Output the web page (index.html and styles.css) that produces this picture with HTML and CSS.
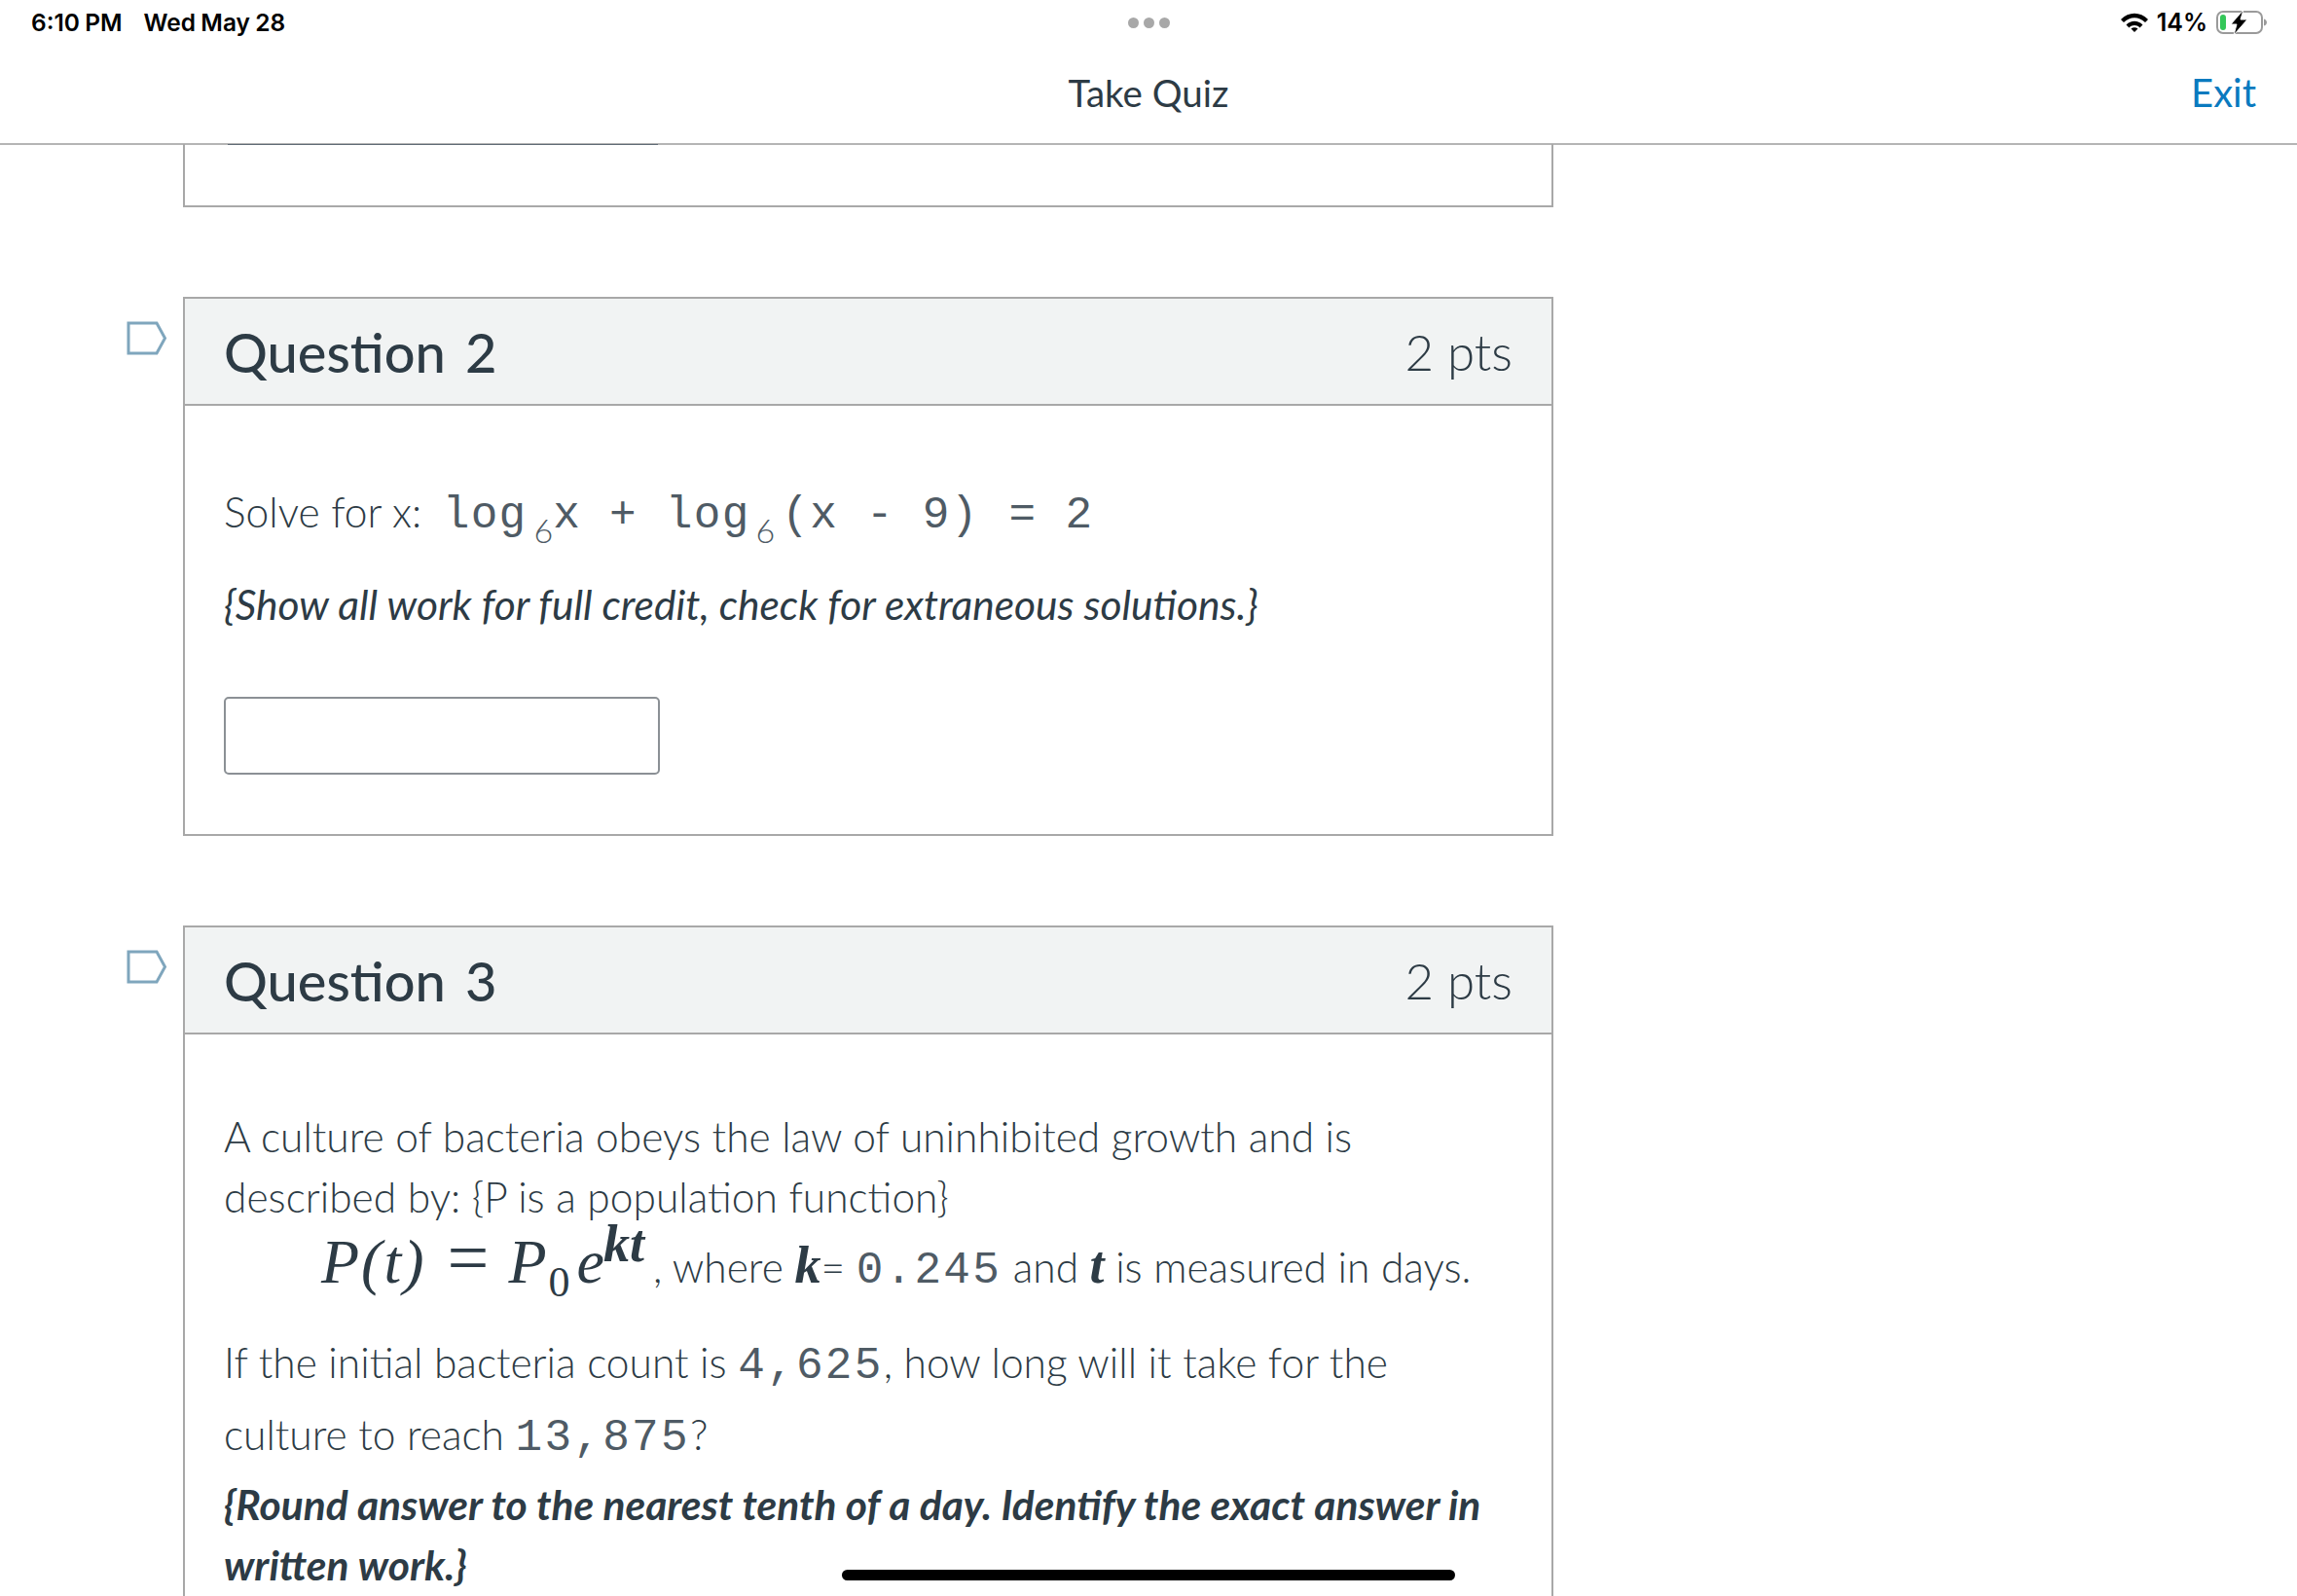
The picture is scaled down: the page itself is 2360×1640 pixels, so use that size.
FILE: index.html
```html
<!DOCTYPE html>
<html lang="en">
<head>
    <meta charset="UTF-8">
    <title>Take Quiz</title>
    <link rel="stylesheet" href="styles.css">
</head>
<body>

    <!-- Status Bar -->
    <div class="status-bar">
        <div class="status-left">
            <span>6:10 PM</span>
            <span>Wed May 28</span>
        </div>
        <div class="status-dots"><i></i><i></i><i></i></div>
        <div class="status-right">
            <svg class="wifi" width="28" height="20" viewBox="0 0 28 20">
                <path d="M0 7C8-1.500 20-1.500 28 7L25 10C18.500 3.500 9.500 3.500 3 10Z"/>
                <path d="M5.500 12.500C10.500 7.500 17.500 7.500 22.500 12.500L19.500 15.500C16.200 12.300 11.800 12.300 8.500 15.500Z"/>
                <path d="M10.500 16.500C12.500 14.800 15.500 14.800 17.500 16.500L14 20Z"/>
            </svg>
            <span class="battery-text">14%</span>
            <svg class="battery" width="52" height="26" viewBox="0 0 52 26">
                <rect x="1" y="2" width="46" height="22" rx="6" fill="none" stroke="#9a9a9a" stroke-width="2"/>
                <rect x="4" y="5" width="6" height="16" rx="3" fill="#34c759"/>
                <path d="M49 9.500C51 10 52 11.500 52 13C52 14.500 51 16 49 16.500Z" fill="#9a9a9a"/>
                <path d="M28 0L15 15H21L18 26L32 10H25Z" fill="#000" stroke="#fff" stroke-width="1"/>
            </svg>
        </div>
    </div>

    <!-- Header Section -->
    <div class="header">
        <div class="header-title">Take Quiz</div>
        <a class="exit-link">Exit</a>
    </div>

    <!-- Quiz Section -->
    <div class="quiz">

        <!-- End of Question 1 -->
        <div class="question-tail">
            <div class="tail-input"></div>
        </div>

        <!-- Question 2 -->
        <div class="question">
            <svg class="flag" width="42" height="36" viewBox="0 0 42 36">
                <path d="M2 2H31L39.500 17.500L31 33H2Z"/>
            </svg>
            <div class="question-header">
                <h2>Question 2</h2>
                <span class="pts">2 pts</span>
            </div>
            <div class="question-body q2-body">
                <p class="solve-line">Solve for x: <span class="mono solve-math">log<sub class="sub-first">6</sub>x + log<sub class="sub-second">6</sub>(x - 9) <span class="equals">= 2</span></span></p>
                <p class="note"><em>{Show all work for full credit, check for extraneous solutions.}</em></p>
                <input type="text" class="answer-input">
            </div>
        </div>

        <!-- Question 3 -->
        <div class="question question-cut">
            <svg class="flag" width="42" height="36" viewBox="0 0 42 36">
                <path d="M2 2H31L39.500 17.500L31 33H2Z"/>
            </svg>
            <div class="question-header">
                <h2>Question 3</h2>
                <span class="pts">2 pts</span>
            </div>
            <div class="question-body q3-body">
                <p class="intro">A culture of bacteria obeys the law of uninhibited growth and is described by: {P is a population function}</p>
                <p class="formula"><span class="math">P(t) <span class="eq">=</span> P<sub>0</sub> e<sup>kt</sup></span>, where <b class="var">k</b>= <span class="mono">0.245</span> and <b class="var">t</b> is measured in days.</p>
                <p class="count">If the initial bacteria count is <span class="mono">4,625</span>, how long will it take for the culture to reach <span class="mono">13,875</span>?</p>
                <p class="round"><b><em>{Round answer to the nearest tenth of a day. Identify the exact answer in written work.}</em></b></p>
            </div>
        </div>
    </div>

    <!-- Home Indicator -->
    <div class="home-bar"></div>

</body>
</html>
```

FILE: styles.css
```css
html, body {
    height: 100%;
}
body {
    position: relative;
    height: 1640px;
    margin: 0;
    overflow: hidden;
    background-color: #fff;
    color: #2d3b45;
    font-family: Lato, "Open Sans", sans-serif;
}
.status-bar {
    display: flex;
    justify-content: space-between;
    align-items: center;
    height: 46px;
    padding: 0 31px 0 32px;
    color: #000;
    font-family: Inter, "Liberation Sans", sans-serif;
    font-size: 24.5px;
    font-weight: 600;
}
.status-left {
    display: flex;
    gap: 22px;
    width: 400px;
    word-spacing: -1px;
}
.status-dots {
    display: flex;
    gap: 5px;
}
.status-dots i {
    width: 11px;
    height: 11px;
    border-radius: 50%;
    background-color: #a8a8a8;
}
.status-right {
    display: flex;
    justify-content: flex-end;
    align-items: center;
    gap: 9px;
    width: 400px;
}
.battery-text {
    font-size: 25px;
}
.header {
    display: flex;
    justify-content: center;
    align-items: center;
    position: relative;
    height: 103px;
    box-sizing: border-box;
    padding-bottom: 4px;
    border-bottom: 2px solid #b5b5b5;
    font-size: 38.5px;
}
.exit-link {
    position: absolute;
    right: 42px;
    top: 25px;
    color: #0a7abf;
    font-size: 40px;
}
.quiz {
    position: relative;
    width: 1408px;
    margin-left: 188px;
}
.question-tail {
    box-sizing: border-box;
    height: 65px;
    margin-top: -1px;
    padding-left: 44px;
    border: 2px solid #a8a8a8;
    border-top: 0;
}
.tail-input {
    width: 442px;
    height: 1px;
    background-color: #5f6b75;
}
.question {
    position: relative;
    margin-top: 92px;
    border: 2px solid #a8a8a8;
}
.question-cut {
    border-bottom: 0;
}
.flag {
    position: absolute;
    left: -60px;
    top: 23px;
    fill: none;
    stroke: #7fa6bd;
    stroke-width: 3;
}
.question-header {
    display: flex;
    justify-content: space-between;
    align-items: center;
    box-sizing: border-box;
    height: 110px;
    padding: 0 40px;
    background-color: #f1f3f3;
    border-bottom: 2px solid #a8a8a8;
}
.question-header h2 {
    margin: 0;
    font-size: 56px;
    font-weight: 500;
    word-spacing: 6px;
}
.pts {
    font-size: 51px;
    font-weight: 300;
}
.question-body {
    padding: 0 40px;
    font-size: 42.5px;
    font-weight: 300;
}
.question-body p {
    margin: 0;
}
.q2-body {
    height: 440px;
    padding-top: 78px;
    box-sizing: border-box;
}
.solve-line {
    line-height: 62px;
}
.mono {
    color: #4f5b65;
    font-family: "Liberation Mono", monospace;
    font-size: 46px;
    font-weight: 400;
    letter-spacing: 2.3px;
}
.solve-math {
    white-space: pre;
    margin-left: 10px;
    letter-spacing: 1.3px;
}
.solve-math sub {
    font-family: Lato, sans-serif;
    font-weight: 300;
    font-size: 34px;
    line-height: 0;
    letter-spacing: 0;
    vertical-align: -16px;
}
.sub-first {
    margin-left: 7px;
}
.sub-second {
    margin: 0 7px 0 6px;
}
.equals {
    margin-left: 2px;
}
.note {
    margin-top: 29px !important;
    font-weight: 400;
    line-height: 62px;
}
.answer-input {
    display: block;
    width: 448px;
    height: 80px;
    box-sizing: border-box;
    margin-top: 64px;
    border: 2px solid #8b9095;
    border-radius: 5px;
    background-color: #fff;
}
.q3-body {
    padding-top: 74px;
    padding-bottom: 4px;
}
.intro {
    line-height: 62px;
}
.formula {
    padding-left: 100px;
    white-space: nowrap;
    line-height: 72px;
}
.math {
    margin-right: 9px;
    font-family: "Liberation Serif", serif;
    font-size: 64px;
    font-style: italic;
    font-weight: 400;
    letter-spacing: 2px;
}
.math .eq {
    margin-left: 4px;
    font-size: 76px;
    font-style: normal;
    line-height: 0;
}
.math sub {
    margin-right: -11px;
    font-size: 44px;
    font-style: normal;
    line-height: 0;
    letter-spacing: 0;
}
.math sup {
    margin-left: -3px;
    font-size: 54px;
    font-weight: 700;
    line-height: 0;
    letter-spacing: 0;
}
.var {
    font-family: "Liberation Serif", serif;
    font-size: 54px;
    font-style: italic;
    font-weight: 700;
}
.count {
    margin: 23px 0 2px !important;
    line-height: 70px;
}
.round {
    line-height: 62px;
}
.round b {
    font-weight: 700;
}
.home-bar {
    position: absolute;
    left: 865px;
    bottom: 16px;
    width: 630px;
    height: 11px;
    border-radius: 6px;
    background-color: #000;
}
```
